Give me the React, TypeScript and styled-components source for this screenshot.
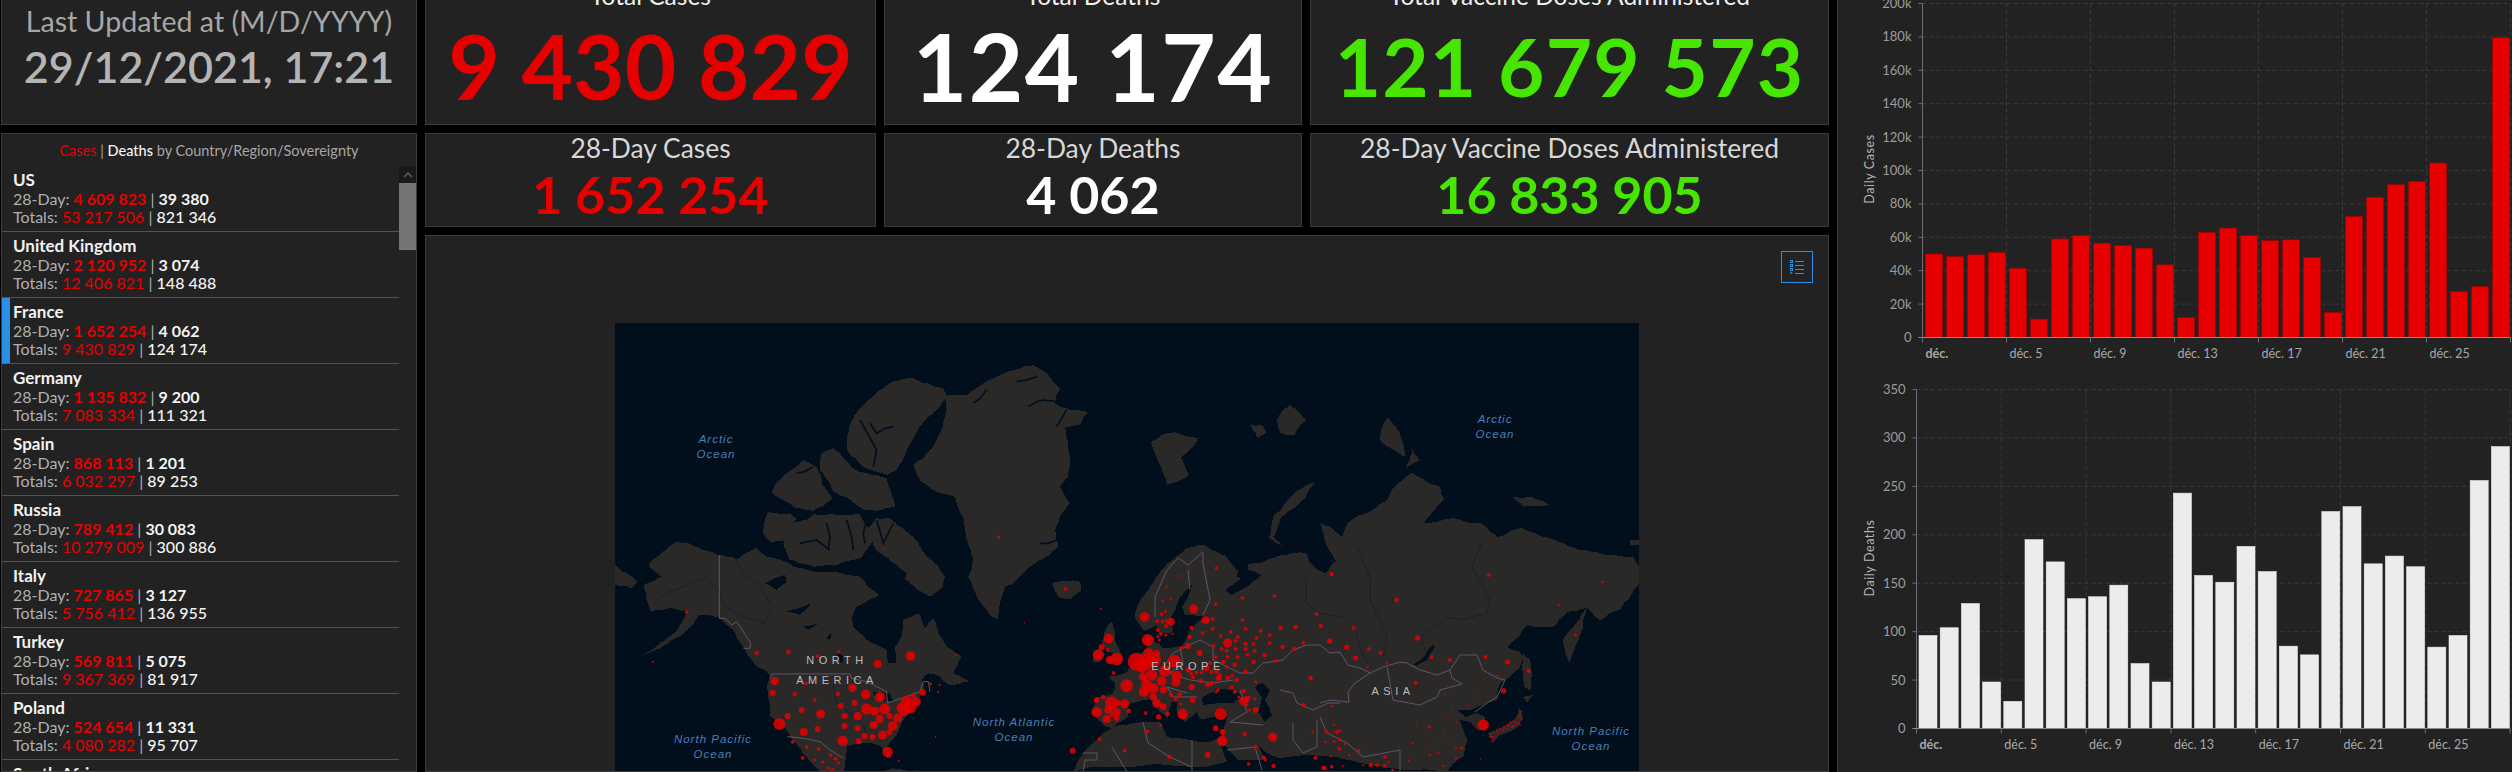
import React from "react";
import styled, { createGlobalStyle } from "styled-components";

const GlobalStyle = createGlobalStyle`
    html, body {
        margin: 0;
        background: #000;
    }
    * {
        box-sizing: border-box;
    }
`;

const FONT = `Lato, "Open Sans", "Liberation Sans", sans-serif`;
const RED = "#e60000";
const GREEN = "#47e600";
const PANEL = "#222222";
const EDGE = "#3c3c3c";

const Viewport = styled.div`
    width: 2512px;
    height: 772px;
    overflow: hidden;
    font-family: ${FONT};
`;

const Page = styled.div`
    display: grid;
    grid-template-columns: 416px 1404px 1fr;
    column-gap: 8px;
    height: 802px;
    margin-top: -30px;
    padding-left: 1px;
`;

const Panel = styled.div`
    background: ${PANEL};
    border: 1px solid ${EDGE};
    overflow: hidden;
`;

const LeftColumn = styled.div`
    display: grid;
    grid-template-rows: 155px 1fr;
    row-gap: 8px;
    min-height: 0;
`;

const UpdatedPanel = styled(Panel)`
    padding-top: 32px;
    text-align: center;
`;

const UpdatedLabel = styled.div`
    font-size: 28.6px;
    line-height: 36px;
    color: #a6a6a6;
    white-space: nowrap;
`;

const UpdatedValue = styled.div`
    font-size: 43px;
    line-height: 48px;
    margin-top: 4px;
    color: #b4b4b4;
    font-weight: 600;
    white-space: nowrap;
`;

const ListPanel = styled(Panel)`
    display: flex;
    flex-direction: column;
    min-height: 0;
`;

const ListTitle = styled.div`
    height: 32px;
    padding-top: 8px;
    font-size: 14.5px;
    line-height: 18px;
    color: #a6a6a6;
    text-align: center;
    white-space: nowrap;
`;

const ListBody = styled.div`
    display: flex;
    flex: 1;
    min-height: 0;
`;

const Rows = styled.div`
    flex: 1;
    min-width: 0;
`;

const Row = styled.div<{ $selected?: boolean }>`
    height: 66px;
    padding: 5px 0 0 ${(p) => (p.$selected ? 3 : 11)}px;
    border-left: ${(p) => (p.$selected ? "8px solid #2b8fe6" : "0")};
    border-bottom: 1px solid #525252;
`;

const RowName = styled.div`
    font-size: 17px;
    line-height: 18px;
    font-weight: 700;
    color: #f2f2f2;
`;

const RowDay = styled.div`
    font-size: 16px;
    line-height: 20px;
    color: #b0b0b0;
    white-space: nowrap;
`;

const RowTotal = styled.div`
    font-size: 16px;
    line-height: 16px;
    color: #b0b0b0;
    white-space: nowrap;
`;

const Red = styled.span<{ $bold?: boolean }>`
    color: ${RED};
    font-weight: ${(p) => (p.$bold ? 700 : 400)};
`;

const White = styled.span<{ $bold?: boolean }>`
    color: #f4f4f4;
    font-weight: ${(p) => (p.$bold ? 700 : 500)};
`;

const Scrollbar = styled.div`
    width: 17px;
    background: #232323;
    flex-shrink: 0;
`;

const ScrollArrow = styled.div`
    height: 17px;
    background: #1a1a1a;
    display: flex;
    align-items: center;
    justify-content: center;
`;

const ScrollThumb = styled.div`
    height: 67px;
    background: #757575;
`;

const CenterColumn = styled.div`
    display: grid;
    grid-template-rows: 155px 94px 1fr;
    row-gap: 8px;
    min-height: 0;
`;

const CardRow = styled.div`
    display: grid;
    grid-template-columns: 451px 418px 519px;
    column-gap: 8px;
`;

const TopCard = styled(Panel)`
    display: flex;
    flex-direction: column;
    align-items: center;
    padding-top: 11px;
`;

const TopTitle = styled.div`
    font-size: 24.5px;
    line-height: 28px;
    color: #f0f0f0;
    white-space: nowrap;
`;

const TopValue = styled.div<{ $color: string; $size: number; $spacing?: number }>`
    color: ${(p) => p.$color};
    font-size: ${(p) => p.$size}px;
    letter-spacing: ${(p) => p.$spacing ?? 0}px;
    line-height: 100px;
    margin-top: 6px;
    font-weight: 700;
    white-space: nowrap;
`;

const SmallCard = styled(Panel)`
    display: flex;
    flex-direction: column;
    align-items: center;
    padding-top: 1px;
`;

const SmallTitle = styled.div`
    font-size: 26.4px;
    line-height: 26px;
    color: #d8d8d8;
    white-space: nowrap;
`;

const SmallValue = styled.div<{ $color: string }>`
    color: ${(p) => p.$color};
    font-size: 52px;
    line-height: 56px;
    margin-top: 5px;
    font-weight: 700;
    white-space: nowrap;
`;

const MapPanel = styled(Panel)`
    position: relative;
    display: flex;
    justify-content: center;
    padding-top: 87px;
    min-height: 0;
`;

const LegendButton = styled.div`
    position: absolute;
    top: 15px;
    right: 15px;
    width: 32px;
    height: 32px;
    border: 1px solid #2b8fe6;
    display: flex;
    align-items: center;
    justify-content: center;
`;

const WorldMap = styled.svg`
    display: block;
    flex-shrink: 0;
    font-family: "Liberation Sans", sans-serif;
`;

const ChartPanel = styled(Panel)`
    border-right: 0;
    border-bottom: 0;
`;

const ChartSvg = styled.svg`
    display: block;
    font-family: ${FONT};
`;

type Country = { name: string; day?: [string, string]; total?: [string, string] };

const COUNTRIES: Country[] = [
    { name: "US", day: ["4 609 823", "39 380"], total: ["53 217 506", "821 346"] },
    { name: "United Kingdom", day: ["2 120 952", "3 074"], total: ["12 406 821", "148 488"] },
    { name: "France", day: ["1 652 254", "4 062"], total: ["9 430 829", "124 174"] },
    { name: "Germany", day: ["1 135 832", "9 200"], total: ["7 083 334", "111 321"] },
    { name: "Spain", day: ["868 113", "1 201"], total: ["6 032 297", "89 253"] },
    { name: "Russia", day: ["789 412", "30 083"], total: ["10 279 009", "300 886"] },
    { name: "Italy", day: ["727 865", "3 127"], total: ["5 756 412", "136 955"] },
    { name: "Turkey", day: ["569 811", "5 075"], total: ["9 367 369", "81 917"] },
    { name: "Poland", day: ["524 654", "11 331"], total: ["4 080 282", "95 707"] },
    { name: "South Africa" },
];

const CASES = [50, 48.5, 49.5, 51, 41.5, 11, 59, 61, 56.5, 55, 53.5, 43.5, 12, 63, 65.5, 61, 58, 58.5, 48, 15, 72.5, 84, 91.5, 93.5, 104.5, 27.5, 30.5, 179.5];
const DEATHS = [96, 104, 129, 48, 28, 195, 172, 134, 136, 148, 67, 48, 243, 158, 151, 188, 162, 85, 76, 224, 229, 170, 178, 167, 84, 96, 256, 291];
const DAYS = ["déc.", "déc. 5", "déc. 9", "déc. 13", "déc. 17", "déc. 21", "déc. 25"];

// roughens a traced outline so the coast looks jagged like the basemap
const jag = (points: string, amount: number) => {
    let seed = points.length * 7 + 13;
    const rand = () => {
        seed = (seed * 16807) % 2147483647;
        return seed / 2147483647 - 0.5;
    };
    let pts = points.split(" ").map((p) => p.split(",").map(Number));
    for (let level = 0; level < 4; level++) {
        const next: number[][] = [];
        pts.forEach((p, i) => {
            const q = pts[(i + 1) % pts.length];
            const len = Math.hypot(q[0] - p[0], q[1] - p[1]);
            next.push(p);
            next.push([(p[0] + q[0]) / 2 + rand() * len * amount, (p[1] + q[1]) / 2 + rand() * len * amount]);
        });
        pts = next;
    }
    return pts.map((p) => `${p[0].toFixed(1)},${p[1].toFixed(1)}`).join(" ");
};

// map shapes traced from crops, each group below has its own crop offset
const NA_LAND = [
    "145,765 230,695 300,715 358,735 410,748 470,715 500,740 560,755 600,775 700,785 780,800 830,850 1000,925 1040,1010 1085,1040 1060,1090 1110,1115 1050,1125 1020,1100 985,1090 965,1110 975,1130 950,1180 910,1230 885,1280 860,1310 875,1345 862,1345 845,1310 800,1300 740,1310 730,1386 660,1386 620,1340 570,1280 510,1220 500,1130 510,1095 470,1070 440,1030 400,960 360,925 300,915 255,965 130,1035 215,975 265,905 220,895 150,905 130,825 185,800",
    "45,765 80,790 112,815 95,835 45,825",
    "1040,255 1100,255 1180,205 1300,165 1345,195 1380,235 1365,280 1420,300 1465,305 1440,345 1395,350 1405,420 1405,500 1380,530 1410,580 1380,620 1365,660 1375,710 1340,740 1290,770 1240,820 1215,830 1195,930 1170,915 1130,860 1105,800 1120,750 1100,690 1090,620 1065,560 1010,545 960,510 940,465 990,420 1030,350 1040,300",
    "740,380 780,295 875,215 940,205 1030,235 1040,262 1010,300 960,350 920,420 890,480 860,495 790,470 740,420",
    "665,430 700,415 760,475 800,490 860,505 885,590 790,600 745,565 700,545 660,480",
    "515,545 560,490 610,450 650,470 665,520 700,565 640,602 590,595 530,560",
    "490,670 505,605 570,610 590,625 560,690 510,695",
    "560,650 620,630 640,612 780,612 815,700 780,745 640,770 570,750 550,700",
    "830,625 870,625 910,655 960,710 1035,800 1030,830 990,860 920,810 870,750 825,715 800,660",
    "1355,820 1400,812 1440,815 1445,840 1410,868 1375,860",
    "845,1386 880,1375 950,1386",
];

const NA_WATER = [
    "755,925 770,890 830,860 870,830 900,870 960,880 1000,925 975,955 960,910 910,930 905,980 885,1010 890,1060 865,1060 860,1020 800,990 760,950",
    "860,740 920,790 900,850 860,810",
    "495,820 555,795 560,815 530,840",
    "560,905 635,880 600,915",
    "610,950 655,940 625,960",
    "710,1020 730,1040 725,1060 712,1040",
    "680,985 695,965 690,990",
    "820,1145 870,1150 880,1175 850,1175 845,1155 825,1165",
];

const NA_CHANNELS = [
    "M1285,290 L1310,275 L1330,270 L1370,275",
    "M1250,215 L1280,210 L1310,200",
    "M1120,280 L1140,265 L1160,240",
    "M1400,300 L1385,325 L1370,350",
    "M1320,700 L1345,700 L1370,690",
    "M880,350 L855,355 L830,370 L810,340",
    "M780,330 L805,375 L830,420 L820,470",
    "M590,490 L615,485 L640,470",
    "M680,640 L690,680 L685,720",
    "M740,630 L755,680 L760,720",
    "M800,630 L790,670 L795,700",
    "M830,630 L850,700 L880,640",
    "M600,700 L650,690 L690,720",
    "M575,1295 L600,1335 L620,1370",
];

const NA_RIVERS = [
    "M160,880 L195,850 L320,805 L360,850 L375,890 L430,920 L495,940 L510,905",
    "M410,750 L425,785 L480,830 L510,880",
    "M700,1120 L710,1180 L790,1240 L800,1280",
];

const NA_BORDERS = [
    "M358,735 L358,925 L375,925 L395,945 L410,935 L430,965 L452,1000 L450,1015 L430,1015",
    "M510,1105 L515,1092 L750,1092 L755,1105 L800,1115 L860,1145 L862,1180 L905,1165 L960,1145 L970,1115 L985,1115 L990,1145",
    "M563,1280 L610,1285 L660,1295 L690,1320 L730,1345",
];

const EURASIA_LAND = [
    "1073,772 1083,753 1097,740 1112,728 1103,725 1092,713 1097,697 1113,693 1115,683 1108,677 1127,672 1133,663 1147,648 1147,637 1153,635 1155,643 1180,647 1187,638 1143,630 1135,618 1137,607 1153,583 1167,563 1187,548 1203,545 1227,557 1238,572 1236,577 1249,577 1247,565 1261,563 1281,555 1306,553 1314,567 1326,573 1336,560 1320,523 1330,527 1342,537 1351,520 1367,513 1387,500 1412,473 1440,487 1444,500 1424,523 1453,518 1481,523 1498,537 1522,528 1546,537 1571,547 1600,553 1632,557 1639,567 1639,583 1630,597 1620,610 1600,620 1587,608 1567,612 1553,627 1527,625 1507,647 1520,652 1523,657 1520,667 1510,677 1500,683 1497,700 1487,703 1470,710 1457,710 1467,717 1477,713 1485,717 1487,730 1477,730 1470,722 1460,720 1467,740 1463,757 1447,772",
    "1587,608 1583,627 1577,643 1570,663 1565,653 1563,640 1573,627",
    "1523,653 1530,660 1530,690 1524,687",
    "1523,697 1533,695 1527,703",
    "1520,707 1523,717 1517,728 1500,735 1493,742 1488,733 1503,727 1517,717",
    "1151,442 1175,432 1198,438 1193,447 1181,457 1189,475 1167,485 1159,463",
    "1250,425 1262,425 1266,433 1258,438",
    "1277,420 1290,405 1306,420 1295,435 1280,433",
    "1316,482 1306,497 1281,517 1273,537 1283,547 1269,538 1273,517 1289,498",
    "1389,417 1400,433 1406,457 1381,442 1381,430",
    "1412,448 1420,460 1406,468",
    "1512,497 1532,497 1549,505 1524,507",
    "1630,540 1639,540 1639,545 1630,545",
    "1105,630 1112,622 1115,640 1122,655 1122,662 1107,663 1113,653 1107,650 1102,643",
    "1093,655 1100,648 1105,655 1100,662 1093,662",
];

const EURASIA_WATER = [
    "1158,643 1167,640 1173,630 1170,620 1180,597 1192,585 1188,597 1182,607 1185,615 1203,616 1213,617 1197,622 1188,635 1180,646 1163,648",
    "1143,632 1157,625 1160,640 1150,636",
    "1112,727 1128,717 1127,705 1140,701 1150,699 1158,710 1168,718 1171,703 1177,700 1177,713 1185,722 1197,712 1200,719 1227,717 1222,737 1207,742 1190,740 1167,737 1160,722 1143,722",
    "1202,698 1213,692 1217,688 1233,690 1242,696 1233,703 1220,703 1203,705",
    "1255,687 1262,683 1270,690 1265,700 1272,715 1265,722 1258,712 1262,698",
    "1220,745 1225,745 1245,772 1232,772",
    "1258,745 1267,753 1282,760 1283,767 1270,763 1262,753",
    "1240,580 1250,570 1262,575 1250,585 1232,595 1225,590",
    "1432,645 1435,647 1427,660 1416,666 1414,664 1424,657",
];

const EURASIA_RIVERS = [
    "M1357,547 L1370,577 L1370,600 L1387,637 L1383,657",
    "M1483,540 L1472,567 L1490,600 L1487,613 L1460,620 L1447,617 L1420,637 L1427,653",
    "M1306,580 L1306,603 L1318,613 L1342,617 L1355,630 L1360,647 L1367,663",
];

const EURASIA_BORDERS = [
    "M1253,673 L1263,663 L1283,660 L1293,650 L1307,645 L1320,645 L1330,653 L1340,652 L1348,665 L1360,668 L1370,673 L1383,667 L1400,662 L1407,663 L1420,670 L1437,675 L1450,670 L1460,655 L1477,655 L1483,670 L1497,678 L1505,680 L1497,697 L1487,703 L1475,712",
    "M1387,667 L1390,683 L1393,700 L1420,705 L1437,697 L1440,690 L1462,684 L1452,678 L1450,670",
    "M1370,673 L1355,683 L1348,692 L1349,702 L1330,700 L1320,703",
    "M1280,690 L1293,693 L1297,703 L1313,710 L1328,703 L1340,703",
    "M1293,723 L1293,740 L1303,753 L1317,747 L1317,720",
    "M1320,717 L1327,733 L1347,743 L1363,757 L1400,750 L1400,772",
    "M1155,617 L1155,597 L1167,570 L1178,558 L1188,565 L1203,552",
    "M1188,570 L1190,590",
    "M1203,552 L1203,563 L1210,600 L1203,615",
    "M1160,673 L1173,653 L1200,640 L1213,647 L1213,660 L1240,673 L1253,673",
    "M1180,647 L1183,663 L1170,673 L1190,680 L1213,683 L1233,680",
    "M1187,693 L1167,687 L1173,697 L1197,697",
    "M1143,722 L1148,743 L1170,757 L1192,767",
    "M1192,740 L1192,772",
    "M1083,753 L1097,753 L1097,760 L1085,760 L1083,772",
    "M1112,747 L1127,772",
    "M1227,750 L1255,747 L1262,770",
    "M1240,690 L1247,712 L1230,722 L1263,725",
];

const OCEAN_LABELS = [
    { x: 716, y: 443, text: "Arctic" },
    { x: 716, y: 458, text: "Ocean" },
    { x: 1495, y: 423, text: "Arctic" },
    { x: 1495, y: 438, text: "Ocean" },
    { x: 713, y: 743, text: "North Pacific" },
    { x: 713, y: 758, text: "Ocean" },
    { x: 1014, y: 726, text: "North Atlantic" },
    { x: 1014, y: 741, text: "Ocean" },
    { x: 1591, y: 735, text: "North Pacific" },
    { x: 1591, y: 750, text: "Ocean" },
];

const REGION_LABELS = [
    { x: 837, y: 664, text: "NORTH" },
    { x: 837, y: 684, text: "AMERICA" },
    { x: 1188, y: 670, text: "EUROPE" },
    { x: 1393, y: 695, text: "ASIA" },
];

type Dot = [number, number, number];

const AMERICA_DOTS: Dot[] = [
    [20, 36, 5], [230, 159, 6], [325, 156, 6], [413, 168, 5], [476, 156, 5], [692, 168, 13], [593, 192, 11], [828, 165, 2], [284, 243, 11], [378, 250, 5], [470, 240, 5], [278, 279, 8], [344, 283, 6], [404, 300, 5], [517, 264, 11], [557, 283, 13], [600, 291, 14], [473, 282, 6], [752, 252, 4], [779, 255, 3], [775, 276, 3], [728, 277, 9], [482, 318, 8], [524, 309, 8], [365, 330, 8], [323, 348, 8], [422, 342, 12], [298, 372, 16], [494, 348, 8], [533, 348, 11], [560, 327, 15], [584, 333, 12], [614, 327, 15], [599, 357, 11], [629, 348, 8], [653, 354, 12], [665, 324, 14], [680, 305, 16], [690, 320, 18], [708, 306, 13], [700, 286, 7], [672, 335, 13], [638, 378, 13], [581, 375, 11], [533, 385, 8], [494, 378, 8], [413, 387, 8], [371, 396, 11], [488, 423, 14], [536, 423, 8], [554, 408, 8], [578, 411, 8], [608, 405, 12], [629, 396, 8], [623, 456, 14], [338, 426, 5], [380, 441, 5], [416, 447, 5], [452, 465, 5], [467, 477, 5], [368, 474, 5], [404, 480, 4], [428, 487, 4], [476, 489, 4], [445, 505, 4], [457, 510, 5], [767, 411, 2], [656, 483, 3], [839, 248, 2], [708, 513, 2], [425, 514, 3],
    [-225, 204, 3], [-81, 186, 3], [1033, 69, 2],
];

const NORTH_DOTS: Dot[] = [
    [1196, 681, 4], [851, 716, 2], [1067, 1034, 2], [1079, 1118, 2], [1007, 1280, 2],
];

const EUROPE_DOTS: Dot[] = [
    [197, 147, 5], [302, 206, 3], [218, 632, 8], [299, 597, 5], [374, 632, 5], [443, 575, 5], [509, 651, 6], [623, 645, 8], [326, 296, 13], [305, 321, 8], [323, 330, 5], [295, 345, 15], [330, 360, 11], [350, 357, 17], [341, 399, 5], [380, 437, 17], [434, 231, 13], [443, 300, 16], [472, 243, 5], [488, 245, 5], [500, 243, 5], [513, 245, 10], [485, 222, 5], [497, 215, 4], [473, 270, 5], [498, 258, 5], [473, 290, 4], [482, 282, 5], [497, 286, 4], [478, 300, 4], [518, 282, 3], [536, 108, 3], [500, 140, 3], [488, 183, 3], [512, 177, 3], [581, 207, 12], [617, 240, 11], [638, 237, 5], [650, 84, 5], [647, 192, 5], [995, 102, 5], [728, 174, 5], [824, 168, 5], [950, 222, 5], [728, 240, 5], [842, 264, 6], [886, 261, 6], [962, 258, 5], [989, 303, 6], [911, 309, 5], [884, 327, 6], [848, 321, 6], [809, 309, 5], [809, 285, 5], [782, 273, 5], [770, 294, 5], [737, 267, 5], [692, 276, 5], [662, 288, 5], [638, 267, 5], [608, 279, 5], [575, 264, 6], [569, 291, 6], [563, 318, 8], [599, 339, 8], [545, 324, 5], [641, 318, 5], [683, 309, 12], [713, 291, 5], [707, 303, 5], [737, 312, 6], [761, 312, 5], [665, 327, 5], [680, 333, 5], [707, 327, 5], [737, 327, 5], [764, 333, 5], [743, 345, 5], [713, 351, 5], [683, 351, 5], [647, 351, 5], [794, 345, 6], [761, 366, 6], [827, 363, 5], [704, 375, 6], [671, 366, 6], [630, 369, 5], [680, 381, 5], [737, 396, 6], [932, 414, 6],
    [410, 365, 24], [425, 375, 20], [445, 340, 14], [465, 360, 16], [440, 370, 18], [470, 340, 9], [450, 360, 14], [495, 393, 16], [523, 363, 17], [530, 407, 14], [455, 405, 15], [430, 410, 12], [485, 423, 13], [528, 427, 12], [440, 435, 15], [432, 455, 14], [460, 445, 14], [490, 450, 10], [460, 470, 10], [470, 490, 12], [490, 500, 9], [513, 465, 6], [539, 465, 7], [575, 441, 8], [543, 492, 4], [578, 480, 8], [527, 480, 5], [548, 522, 14], [503, 522, 6], [476, 531, 7], [437, 519, 5], [482, 555, 4], [386, 513, 6], [374, 492, 12], [290, 516, 14], [320, 537, 11], [350, 517, 11], [350, 534, 8], [335, 490, 18], [355, 490, 8], [310, 471, 6], [290, 480, 8], [325, 510, 11], [335, 525, 6], [565, 390, 7], [575, 402, 5], [590, 397, 5], [605, 397, 5], [620, 385, 8], [635, 396, 5], [580, 412, 5], [602, 423, 6], [635, 430, 6], [622, 435, 6], [656, 415, 8], [683, 414, 6], [710, 420, 6], [696, 408, 5], [650, 395, 6], [660, 405, 5], [695, 442, 5], [731, 453, 6], [704, 456, 5], [716, 471, 4], [747, 471, 4], [731, 483, 12], [741, 477, 8], [764, 477, 4], [748, 510, 4], [767, 510, 8], [741, 495, 4], [654, 450, 5], [648, 456, 4], [767, 426, 4], [662, 522, 16], [647, 565, 8], [668, 576, 8], [667, 603, 14], [660, 600, 7], [734, 582, 6], [818, 591, 12], [767, 621, 5], [791, 654, 5], [797, 660, 4], [746, 672, 5], [821, 678, 6], [911, 495, 5], [938, 576, 3], [997, 498, 3], [978, 576, 4], [1004, 576, 3], [1001, 605, 3], [1018, 600, 4], [946, 654, 5], [975, 684, 5], [995, 680, 5],
];

const ASIA_DOTS: Dot[] = [
    [35, 102, 5], [230, 180, 6], [506, 105, 5], [848, 126, 3], [716, 195, 3], [767, 285, 4], [3, 258, 5], [101, 264, 5], [29, 303, 7], [80, 321, 7], [146, 327, 5], [107, 354, 7], [182, 339, 5], [293, 294, 7], [335, 351, 5], [389, 360, 5], [497, 351, 5], [563, 366, 7], [626, 393, 6], [143, 381, 3], [200, 369, 3], [533, 408, 3], [492, 417, 2], [287, 429, 5], [551, 453, 7], [374, 462, 2], [476, 468, 2], [617, 471, 2], [446, 495, 2], [395, 507, 2], [401, 519, 2], [380, 534, 2], [410, 548, 2], [490, 555, 15], [482, 657, 2], [329, 561, 4], [290, 555, 2], [371, 576, 2], [278, 609, 3], [320, 615, 2], [359, 606, 2], [402, 597, 2], [408, 627, 3], [425, 624, 4], [438, 603, 2], [355, 639, 3], [116, 633, 5], [195, 651, 5], [152, 675, 6], [172, 675, 5], [194, 678, 5], [205, 666, 3], [218, 690, 4], [58, 627, 5], [44, 606, 3], [16, 606, 3], [58, 597, 3], [75, 612, 3], [88, 645, 3], [32, 648, 3], [68, 678, 3], [10, 684, 6], [130, 675, 3], [267, 663, 3], [330, 645, 3], [370, 678, 3], [408, 655, 3], [52, 576, 5], [60, 573, 3], [16, 570, 3], [24, 579, 3], [42, 555, 3], [37, 498, 3],
    [604, 515, 2.5], [601, 527, 2.5], [605, 538, 2.5], [597, 548, 2.5], [590, 552, 2.5], [580, 558, 2.5], [570, 548, 2.5], [560, 565, 2.5], [550, 570, 2.5], [540, 565, 2.5], [530, 570, 2.5], [520, 575, 2.5], [512, 580, 2.5], [518, 590, 2.5], [517, 604, 2.5], [584, 545, 2.5], [575, 560, 2.5], [565, 555, 2.5], [600, 555, 2.5], [595, 530, 2.5], [552, 560, 2.5], [535, 578, 2.5], [510, 590, 2.5],
];

const Dots = ({ items, transform }: { items: Dot[]; transform: string }) => (
    <g transform={transform} fill="#e00000" fillOpacity={0.88}>
        {items.map(([x, y, r], i) => (
            <circle key={i} cx={x} cy={y} r={r * 1.12} />
        ))}
    </g>
);

const MapDrawing = () => {
    const sea = "#010e1b";
    const land = "#2a2928";
    const border = "#5d5669";
    return (
        <WorldMap width={1024} height={449} viewBox="615 323 1024 449">
            <rect x={615} y={323} width={1024} height={449} fill={sea} />
            <g transform="translate(600 310) scale(0.3333)">
                {NA_LAND.map((p, i) => <polygon key={i} points={jag(p, 0.14)} fill={land} shapeRendering="crispEdges" />)}
                {NA_WATER.map((p, i) => <polygon key={i} points={jag(p, 0.1)} fill={sea} shapeRendering="crispEdges" />)}
                {NA_CHANNELS.map((d, i) => <path key={i} d={d} fill="none" stroke={sea} strokeWidth={5} />)}
                {NA_RIVERS.map((d, i) => <path key={i} d={d} fill="none" stroke="#15202e" strokeWidth={3} />)}
                {NA_BORDERS.map((d, i) => <path key={i} d={d} fill="none" stroke={border} strokeWidth={3} />)}
            </g>
            {EURASIA_LAND.map((p, i) => <polygon key={i} points={jag(p, 0.14)} fill={land} shapeRendering="crispEdges" />)}
            {EURASIA_WATER.map((p, i) => <polygon key={i} points={jag(p, 0.08)} fill={sea} shapeRendering="crispEdges" />)}
            {EURASIA_RIVERS.map((d, i) => <path key={i} d={d} fill="none" stroke="#15202e" strokeWidth={1} />)}
            {EURASIA_BORDERS.map((d, i) => <path key={i} d={d} fill="none" stroke={border} strokeWidth={1} />)}
            <Dots items={NORTH_DOTS} transform="translate(600 310) scale(0.3333)" />
            <Dots items={AMERICA_DOTS} transform="translate(680 600) scale(0.3333)" />
            <Dots items={EUROPE_DOTS} transform="translate(1000 540) scale(0.3333)" />
            <Dots items={ASIA_DOTS} transform="translate(1320 540) scale(0.3333)" />
            {OCEAN_LABELS.map((l, i) => (
                <text key={i} x={l.x} y={l.y} textAnchor="middle" fontSize={11.5} fontStyle="italic" letterSpacing={1} fill="#4a7fb8">
                    {l.text}
                </text>
            ))}
            {REGION_LABELS.map((l, i) => (
                <text key={i} x={l.x} y={l.y} textAnchor="middle" fontSize={11} letterSpacing={4.5} fill="#bcbcbc">
                    {l.text}
                </text>
            ))}
        </WorldMap>
    );
};

type ChartProps = {
    viewTop: number;
    viewHeight: number;
    data: number[];
    max: number;
    step: number;
    format: (v: number) => string;
    title: string;
    axisX: number;
    topY: number;
    zeroY: number;
    barX: number;
    barW: number;
    pitch: number;
    fill: string;
    stroke: string;
    titleY: number;
};

const Chart = (c: ChartProps) => {
    const scale = (c.zeroY - c.topY) / c.max;
    const ticks: number[] = [];
    for (let v = 0; v <= c.max; v += c.step) ticks.push(v);
    const tickGap = c.pitch * 4;
    const right = c.axisX + tickGap * 7;
    return (
        <ChartSvg width={674} height={c.viewHeight} viewBox={`1838 ${c.viewTop} 674 ${c.viewHeight}`}>
            {ticks.map((v) => {
                const y = c.zeroY - v * scale;
                return (
                    <g key={v}>
                        {v > 0 && <line x1={c.axisX} x2={right} y1={y} y2={y} stroke="#3a3a3a" strokeDasharray="4 3" />}
                        <line x1={c.axisX - 4} x2={c.axisX} y1={y} y2={y} stroke="#6e6e6e" />
                        <text x={c.axisX - 11} y={y + 4.5} textAnchor="end" fontSize={13} fill="#9c9c9c">
                            {c.format(v)}
                        </text>
                    </g>
                );
            })}
            {DAYS.map((_, i) => {
                const x = c.axisX + tickGap * (i + 1);
                return <line key={i} x1={x} x2={x} y1={c.topY} y2={c.zeroY} stroke="#3a3a3a" strokeDasharray="4 3" />;
            })}
            {c.data.map((v, i) => (
                <rect
                    key={i}
                    x={c.barX + i * c.pitch}
                    y={c.zeroY - v * scale}
                    width={c.barW}
                    height={v * scale}
                    fill={c.fill}
                    stroke={c.stroke}
                    strokeWidth={0.6}
                />
            ))}
            <line x1={c.axisX} x2={c.axisX} y1={c.topY} y2={c.zeroY} stroke="#6e6e6e" />
            <line x1={c.axisX - 4} x2={right} y1={c.zeroY} y2={c.zeroY} stroke="#8c8c8c" />
            {DAYS.concat("").map((day, i) => {
                const x = c.axisX + tickGap * i;
                return (
                    <g key={i}>
                        <line x1={x} x2={x} y1={c.zeroY} y2={c.zeroY + 5} stroke="#6e6e6e" />
                        <text x={x + 3} y={c.zeroY + 20} fontSize={12.5} fontWeight={i === 0 ? 700 : 400} fill="#a8a8a8">
                            {day}
                        </text>
                    </g>
                );
            })}
            <text
                transform={`translate(1874 ${c.titleY}) rotate(-90)`}
                textAnchor="middle"
                fontSize={12.5}
                letterSpacing={0.6}
                fill="#b4b4b4"
            >
                {c.title}
            </text>
        </ChartSvg>
    );
};

const StatLine = ({ label, values, bold }: { label: string; values: [string, string]; bold?: boolean }) => (
    <>
        {label}: <Red $bold={bold}>{values[0]}</Red> | <White $bold={bold}>{values[1]}</White>
    </>
);

const App = () => {
    return (
        <Viewport>
            <GlobalStyle />
            <Page>
                <LeftColumn>
                    <UpdatedPanel>
                        <UpdatedLabel>Last Updated at (M/D/YYYY)</UpdatedLabel>
                        <UpdatedValue>29/12/2021, 17:21</UpdatedValue>
                    </UpdatedPanel>
                    <ListPanel>
                        <ListTitle>
                            <Red>Cases</Red> | <White>Deaths</White> by Country/Region/Sovereignty
                        </ListTitle>
                        <ListBody>
                            <Rows>
                                {COUNTRIES.map((c) => (
                                    <Row key={c.name} $selected={c.name === "France"}>
                                        <RowName>{c.name}</RowName>
                                        {c.day && <RowDay><StatLine label="28-Day" values={c.day} bold /></RowDay>}
                                        {c.total && <RowTotal><StatLine label="Totals" values={c.total} /></RowTotal>}
                                    </Row>
                                ))}
                            </Rows>
                            <Scrollbar>
                                <ScrollArrow>
                                    <svg width="10" height="6" viewBox="0 0 10 6">
                                        <path d="M1 5 L5 1 L9 5" fill="none" stroke="#5c5c5c" strokeWidth="1.5" />
                                    </svg>
                                </ScrollArrow>
                                <ScrollThumb />
                            </Scrollbar>
                        </ListBody>
                    </ListPanel>
                </LeftColumn>
                <CenterColumn>
                    <CardRow>
                        <TopCard>
                            <TopTitle>Total Cases</TopTitle>
                            <TopValue $color={RED} $size={89}>9 430 829</TopValue>
                        </TopCard>
                        <TopCard>
                            <TopTitle>Total Deaths</TopTitle>
                            <TopValue $color="#ffffff" $size={94} $spacing={1.5}>124 174</TopValue>
                        </TopCard>
                        <TopCard>
                            <TopTitle>Total Vaccine Doses Administered</TopTitle>
                            <TopValue $color={GREEN} $size={80} $spacing={1.2}>121 679 573</TopValue>
                        </TopCard>
                    </CardRow>
                    <CardRow>
                        <SmallCard>
                            <SmallTitle>28-Day Cases</SmallTitle>
                            <SmallValue $color={RED}>1 652 254</SmallValue>
                        </SmallCard>
                        <SmallCard>
                            <SmallTitle>28-Day Deaths</SmallTitle>
                            <SmallValue $color="#ffffff">4 062</SmallValue>
                        </SmallCard>
                        <SmallCard>
                            <SmallTitle>28-Day Vaccine Doses Administered</SmallTitle>
                            <SmallValue $color={GREEN}>16 833 905</SmallValue>
                        </SmallCard>
                    </CardRow>
                    <MapPanel>
                        <MapDrawing />
                        <LegendButton>
                            <svg width="16" height="16" viewBox="0 0 16 16" fill="none" stroke="#2b8fe6">
                                <rect x="1.5" y="1.5" width="2" height="2" />
                                <rect x="1.5" y="5.5" width="2" height="2" />
                                <rect x="1.5" y="9.5" width="2" height="2" />
                                <path d="M1.5 14H3.5M2 13V15M6 2.5H15M6 6.5H15M6 10.5H15M6 14.5H15" />
                            </svg>
                        </LegendButton>
                    </MapPanel>
                </CenterColumn>
                <ChartPanel>
                    <Chart
                        viewTop={-30}
                        viewHeight={400}
                        data={CASES}
                        max={200}
                        step={20}
                        format={(v) => (v === 0 ? "0" : `${v}k`)}
                        title="Daily Cases"
                        axisX={1922.5}
                        topY={2.5}
                        zeroY={336.5}
                        barX={1925.5}
                        barW={17}
                        pitch={21}
                        fill={RED}
                        stroke="#a00000"
                        titleY={168}
                    />
                    <Chart
                        viewTop={370}
                        viewHeight={402}
                        data={DEATHS}
                        max={350}
                        step={50}
                        format={(v) => String(v)}
                        title="Daily Deaths"
                        axisX={1916.5}
                        topY={388.5}
                        zeroY={727.5}
                        barX={1919}
                        barW={18}
                        pitch={21.2}
                        fill="#ececec"
                        stroke="#ececec"
                        titleY={557}
                    />
                </ChartPanel>
            </Page>
        </Viewport>
    );
};

export default App;
